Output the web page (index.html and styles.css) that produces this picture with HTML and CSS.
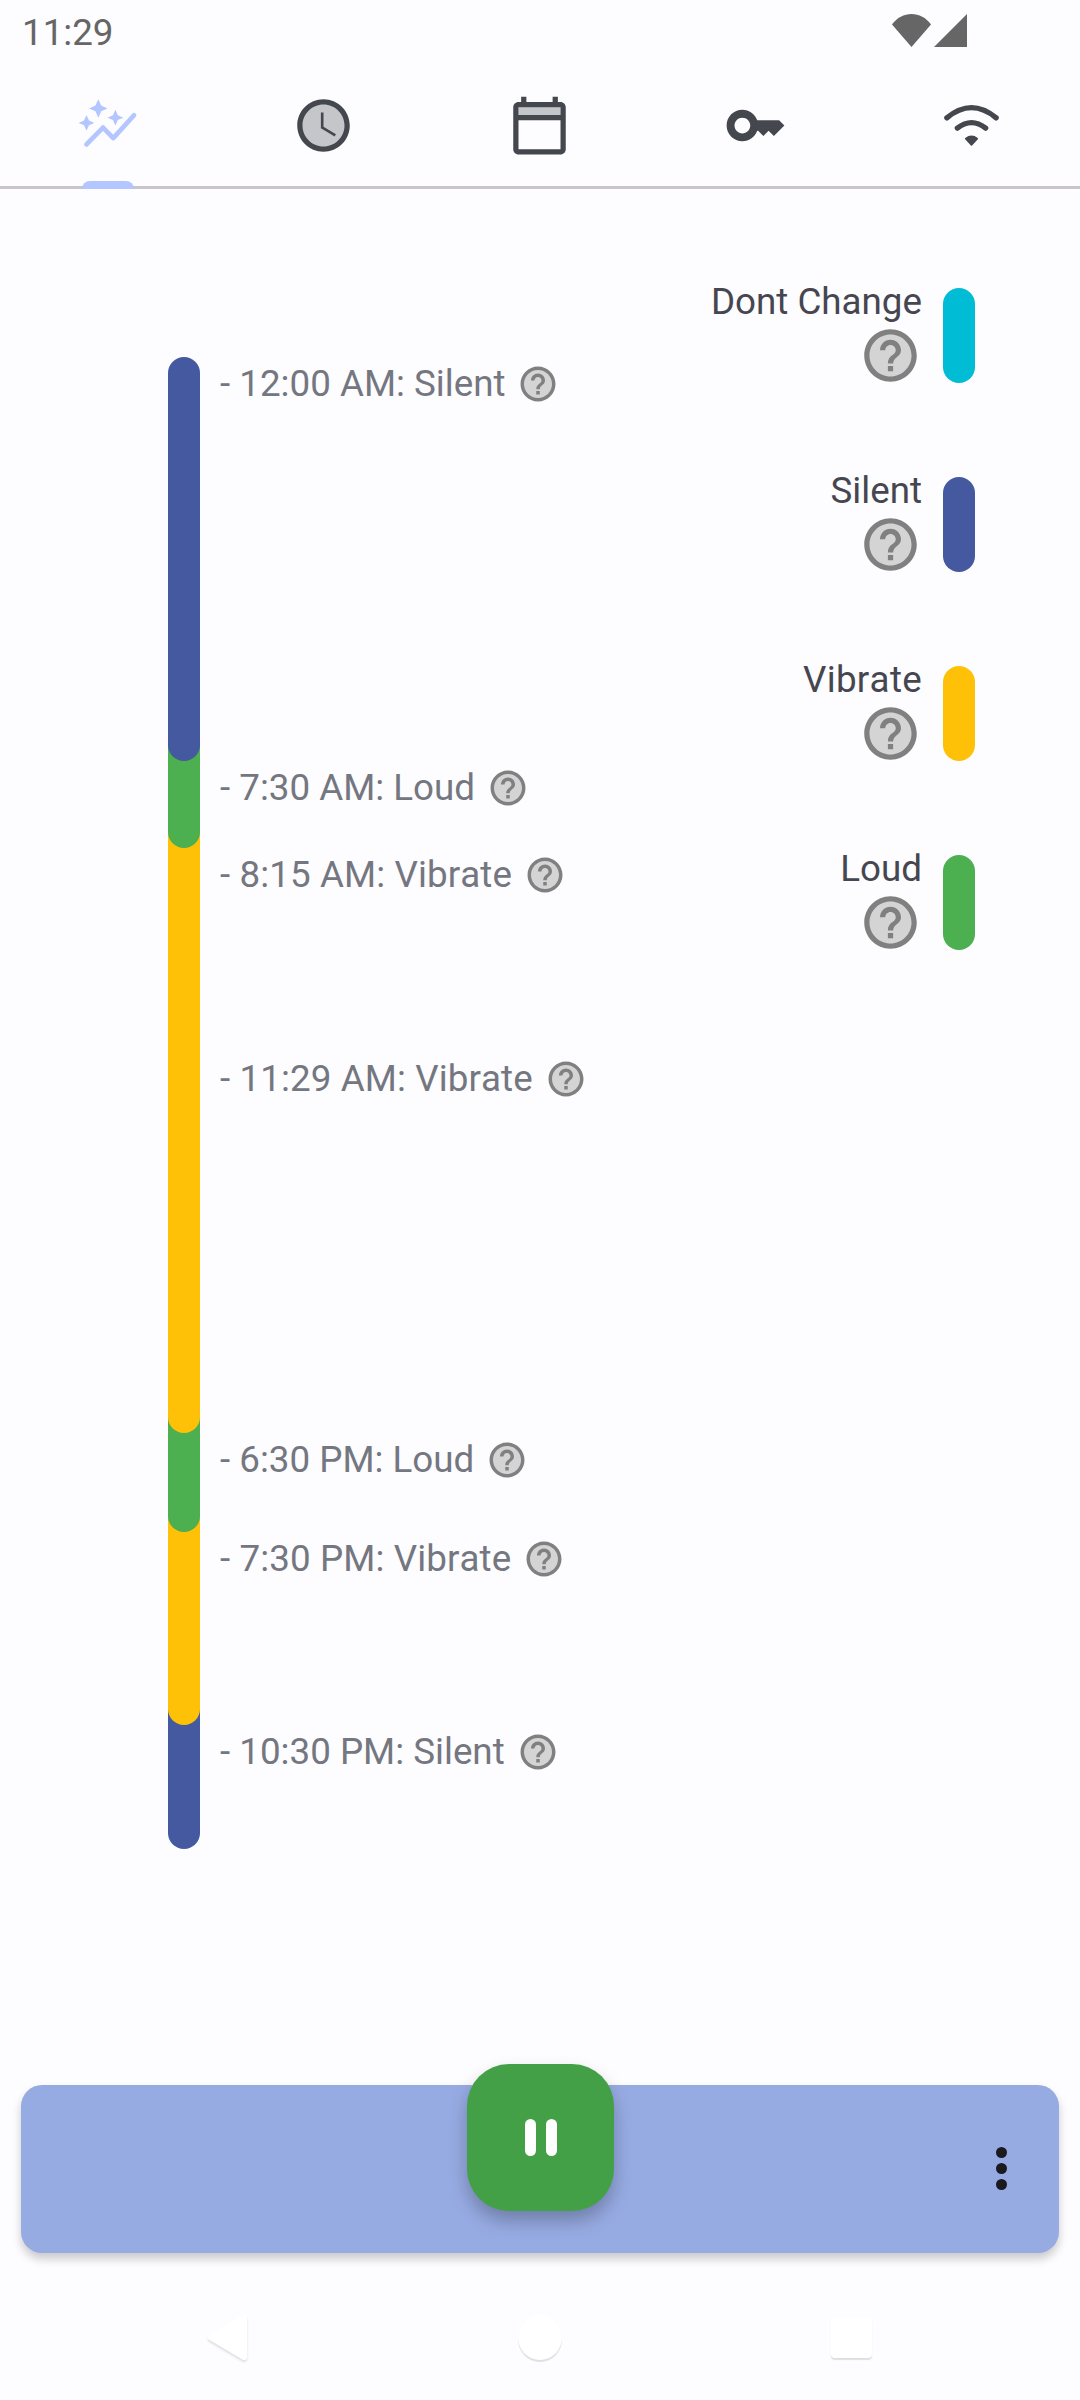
FILE: index.html
```html
<!DOCTYPE html>
<html lang="en">
<head>
  <meta charset="utf-8">
  <title>Schedule</title>
  <link rel="stylesheet" href="styles.css">
</head>
<body>
  <!-- shared help icon -->
  <svg class="defs" width="0" height="0">
    <symbol id="help" viewBox="0 0 24 24">
      <circle cx="12" cy="12" r="9" fill="#d4d4d5"/>
      <path fill="#808080" d="M11 18h2v-2h-2v2zm1-16C6.48 2 2 6.48 2 12s4.48 10 10 10 10-4.48 10-10S17.52 2 12 2zm0 18c-4.41 0-8-3.59-8-8s3.59-8 8-8 8 3.59 8 8-3.59 8-8 8zm0-14c-2.21 0-4 1.79-4 4h2c0-1.1.9-2 2-2s2 .9 2 2c0 2-3 1.75-3 5h2c0-2.25 3-2.5 3-5 0-2.21-1.79-4-4-4z"/>
    </symbol>
  </svg>

  <div class="page">
    <!-- status bar -->
    <div class="status-bar">
      <span class="clock">11:29</span>
      <div class="status-icons">
        <svg class="status-wifi" viewBox="0 0 39 33"><path d="M0 10.5C5 3.500 12 0 19.500 0S34 3.500 39 10.500L19.500 33z"/></svg>
        <svg class="status-signal" viewBox="0 0 33 33"><path d="M33 0v33H0z"/></svg>
      </div>
    </div>

    <!-- tabs -->
    <nav class="tabs">
      <div class="tab active">
        <svg class="tab-icon" viewBox="0 0 24 24">
          <path fill="#b3c6ff" d="M14.06 9.94L12 9l2.06-.94L15 6l.94 2.06L18 9l-2.06.94L15 12zM4 14l.94-2.06L7 11l-2.06-.94L4 8l-.94 2.06L1 11l2.06.94zM8.500 9l1.090-2.410L12 5.500 9.590 4.410 8.500 2 7.410 4.410 5 5.500l2.410 1.090z"/>
          <path fill="none" stroke="#b3c6ff" stroke-width="1.800" stroke-linecap="round" stroke-linejoin="round" d="M4 19.200l6.300-6.400 3.900 4 7.900-8.700"/>
        </svg>
        <span class="indicator"></span>
      </div>
      <div class="tab">
        <svg class="tab-icon" viewBox="0 0 24 24">
          <circle cx="12" cy="12" r="8.500" fill="#c5c6ca"/>
          <path fill="#44474e" d="M11.990 2C6.470 2 2 6.480 2 12s4.470 10 9.990 10C17.520 22 22 17.520 22 12S17.520 2 11.990 2zM12 20c-4.420 0-8-3.580-8-8s3.580-8 8-8 8 3.580 8 8-3.580 8-8 8z"/>
          <path fill="#44474e" d="M12 7h-1v6l5.250 3.150.5-.820L12 12.500z"/>
        </svg>
      </div>
      <div class="tab">
        <svg class="tab-icon" viewBox="0 0 24 24">
          <rect x="4" y="5" width="16" height="3" fill="#c5c6ca"/>
          <path fill="#44474e" d="M20 3h-1V1h-2v2H7V1H5v2H4c-1.100 0-2 .9-2 2v16c0 1.100.9 2 2 2h16c1.100 0 2-.9 2-2V5c0-1.100-.9-2-2-2zm0 18H4V10h16v11zm0-13H4V5h16v3z"/>
        </svg>
      </div>
      <div class="tab">
        <svg class="tab-icon" viewBox="0 0 24 24">
          <path fill="#44474e" d="M21 10h-8.350C11.830 7.670 9.610 6 7 6c-3.310 0-6 2.690-6 6s2.690 6 6 6c2.610 0 4.830-1.670 5.650-4H13l2 2 2-2 2 2 4-4.040L21 10zM7 15c-1.650 0-3-1.350-3-3s1.350-3 3-3 3 1.350 3 3-1.350 3-3 3z"/>
        </svg>
      </div>
      <div class="tab">
        <svg class="tab-icon" viewBox="0 0 24 24">
          <path fill="none" stroke="#44474e" stroke-width="2" stroke-linecap="round" d="M2.600 9.100Q12 1.300 21.400 9.100M6.600 13Q12 8.800 17.400 13"/>
          <path fill="#44474e" stroke="#44474e" stroke-width=".6" stroke-linejoin="round" d="M9.800 17Q12 15.300 14.200 17L12 19.400z"/>
        </svg>
      </div>
    </nav>

    <main class="content">
      <div class="timeline">
        <div class="block first" style="height:404px">
          <div class="seg silent"></div>
          <div class="labels">
            <div class="entry"><span>- 12:00 AM: Silent</span><svg class="help-sm"><use href="#help"/></svg></div>
          </div>
        </div>
        <div class="block" style="height:87px">
          <div class="seg loud"></div>
          <div class="labels">
            <div class="entry"><span>- 7:30 AM: Loud</span><svg class="help-sm"><use href="#help"/></svg></div>
          </div>
        </div>
        <div class="block" style="height:585px">
          <div class="seg vibrate"></div>
          <div class="labels">
            <div class="entry wide"><span>- 8:15 AM: Vibrate</span><svg class="help-sm"><use href="#help"/></svg></div>
            <div class="entry wide now"><span>- 11:29 AM: Vibrate</span><svg class="help-sm"><use href="#help"/></svg></div>
          </div>
        </div>
        <div class="block" style="height:99px">
          <div class="seg loud"></div>
          <div class="labels">
            <div class="entry"><span>- 6:30 PM: Loud</span><svg class="help-sm"><use href="#help"/></svg></div>
          </div>
        </div>
        <div class="block" style="height:193px">
          <div class="seg vibrate"></div>
          <div class="labels">
            <div class="entry wide"><span>- 7:30 PM: Vibrate</span><svg class="help-sm"><use href="#help"/></svg></div>
          </div>
        </div>
        <div class="block" style="height:124px">
          <div class="seg silent"></div>
          <div class="labels">
            <div class="entry"><span>- 10:30 PM: Silent</span><svg class="help-sm"><use href="#help"/></svg></div>
          </div>
        </div>
      </div>

      <!-- legend -->
      <div class="legend">
        <div class="legend-item">
          <div class="legend-text"><span>Dont Change</span><svg class="help-lg"><use href="#help"/></svg></div>
          <div class="swatch dont-change"></div>
        </div>
        <div class="legend-item">
          <div class="legend-text"><span>Silent</span><svg class="help-lg"><use href="#help"/></svg></div>
          <div class="swatch silent"></div>
        </div>
        <div class="legend-item">
          <div class="legend-text wide"><span>Vibrate</span><svg class="help-lg"><use href="#help"/></svg></div>
          <div class="swatch vibrate"></div>
        </div>
        <div class="legend-item">
          <div class="legend-text"><span>Loud</span><svg class="help-lg"><use href="#help"/></svg></div>
          <div class="swatch loud"></div>
        </div>
      </div>
    </main>

    <!-- bottom app bar -->
    <div class="bottom-bar">
      <button class="fab"><span class="pause"></span><span class="pause"></span></button>
      <div class="menu"><span></span><span></span><span></span></div>
    </div>

    <!-- system navigation -->
    <div class="sys-nav">
      <svg class="nav-back" viewBox="0 0 40 45"><path d="M36 3L3 22.500 36 42z"/></svg>
      <span class="nav-home"></span>
      <span class="nav-recent"></span>
    </div>
  </div>
</body>
</html>
```

FILE: styles.css
```css
* {
  margin: 0; padding: 0; box-sizing: border-box;
}
body {
  background-color: #fdfcff;
  font-family: Roboto, sans-serif;
  font-kerning: none;
}
.defs {
  position: absolute;
}
.page {
  display: flex; flex-direction: column;
  width: 1080px; height: 2400px;
  overflow: hidden;
}

/* status bar */
.status-bar {
  display: flex; align-items: flex-start; justify-content: space-between;
  height: 63px;
  padding: 11px 113px 0 22px;
}
.clock {
  font-size: 36.75px;
  line-height: 43px;
  color: #666;
}
.status-icons {
  display: flex;
  gap: 3px;
  padding-top: 3px;
}
.status-wifi { width: 39px; height: 33px; fill: #666; }
.status-signal { width: 33px; height: 33px; fill: #666; }

/* tabs */
.tabs {
  display: flex;
  height: 126px;
  border-bottom: 3px solid #cac4d0;
}
.tab {
  position: relative;
  flex: 1;
  display: flex; justify-content: center;
  padding-top: 31px;
}
.tab-icon { width: 63px; height: 63px; margin-left: -1px; }
.indicator {
  position: absolute;
  bottom: -3px; left: 82px;
  width: 52px; height: 8px;
  background-color: #b3c6ff;
  border-radius: 8px 8px 0 0;
}

/* timeline + legend */
.content {
  flex: 1;
  display: flex; justify-content: space-between; align-items: flex-start;
  padding: 0 105px 0 168px;
}
.timeline {
  display: flex; flex-direction: column;
  margin-top: 168px;
}
.block {
  display: flex;
  gap: 20px;
}
.seg {
  width: 32px;
  height: calc(100% + 32px);
  margin-top: -32px;
  border-radius: 16px;
  flex: none;
}
.block.first .seg {
  height: 100%;
  margin-top: 0;
}
/* earlier blocks sit on top of the next one */
.block:nth-child(1) .seg { z-index: 6; }
.block:nth-child(2) .seg { z-index: 5; }
.block:nth-child(3) .seg { z-index: 4; }
.block:nth-child(4) .seg { z-index: 3; }
.block:nth-child(5) .seg { z-index: 2; }
.block:nth-child(6) .seg { z-index: 1; }

.silent { background-color: #44599f; }
.loud { background-color: #4caf50; }
.vibrate { background-color: #ffc107; }
.dont-change { background-color: #00bcd4; }

.labels {
  padding-top: 1.500px;
}
.entry {
  display: flex; align-items: center;
  height: 50px;
  gap: 12px;
  font-size: 36.75px;
  white-space: nowrap;
  color: #74777f;
}
.entry.wide {
  letter-spacing: .1px;
}
.entry.now {
  margin-top: 154px;
}
.help-sm { width: 42px; height: 42px; }
.help-lg { width: 63px; height: 63px; }

.legend {
  display: flex; flex-direction: column;
  gap: 87.500px;
  margin-top: 96px;
}
.legend-item {
  display: flex; align-items: center; justify-content: flex-end;
  gap: 21px;
}
.legend-text {
  display: flex; flex-direction: column; align-items: flex-end;
  font-size: 36.75px;
  line-height: 33.500px;
  color: #45464f;
}
.legend-text.wide {
  letter-spacing: .3px;
}
.legend-text span {
  margin-bottom: 5px;
}
.swatch {
  width: 32px; height: 95px;
  border-radius: 16px;
}

/* bottom bar */
.bottom-bar {
  position: relative;
  display: flex; align-items: center; justify-content: flex-end;
  height: 168px;
  margin: 0 21px;
  padding: 0 52px 1px 0;
  background-color: #97abe3;
  border-radius: 21px;
  box-shadow: 0 6px 10px rgba(0, 0, 0, 0.2);
}
.fab {
  position: absolute;
  top: -21px; left: 446px;
  display: flex; align-items: center; justify-content: center;
  gap: 10px;
  width: 147px; height: 147px;
  background-color: #43a047;
  border: 0;
  border-radius: 42px;
  box-shadow: 0 10px 18px rgba(0, 0, 0, 0.25);
}
.pause {
  width: 11px; height: 37px;
  background-color: #fff;
  border-radius: 6px;
}
.menu {
  display: flex; flex-direction: column;
  gap: 5px;
}
.menu span {
  width: 11px; height: 11px;
  background-color: #1b1b1f;
  border-radius: 50%;
}

/* system nav */
.sys-nav {
  display: flex; justify-content: center; align-items: center;
  height: 147px;
  padding-top: 22px;
}
.nav-back {
  width: 40px; height: 45px;
  fill: #fff; stroke: #fff; stroke-width: 6px; stroke-linejoin: round;
  filter: drop-shadow(0 2px 1px rgba(0, 0, 0, 0.12));
}
.nav-home {
  width: 44px; height: 45px;
  margin: 0 269px 0 270px;
  background-color: #fff;
  border-radius: 50%;
  box-shadow: 0 2px 1px rgba(0, 0, 0, 0.12);
}
.nav-recent {
  width: 41px; height: 40px;
  background-color: #fff;
  border-radius: 4px;
  box-shadow: 0 2px 1px rgba(0, 0, 0, 0.12);
}
```
